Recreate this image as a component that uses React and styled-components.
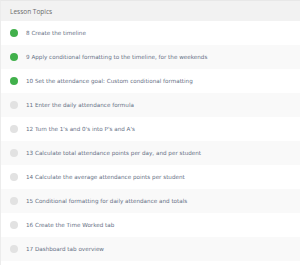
import React from "react";
import styled, { createGlobalStyle } from "styled-components";

const Global = createGlobalStyle`
  html, body { margin: 0; padding: 0; background: #fff; }
  body { font-family: "DejaVu Sans", "Open Sans", sans-serif; }
`;

const Panel = styled.div`
  width: 300px;
  height: 265px;
  box-sizing: border-box;
  border-top: 1px solid #e8e8e8;
  border-left: 1px solid #ececec;
  display: flex;
  flex-direction: column;
  overflow: hidden;
`;

const Header = styled.div`
  height: 20px;
  flex: none;
  display: flex;
  align-items: center;
  padding-left: 9px;
  background: #f2f2f2;
  color: #6b6b6b;
  font-family: "Open Sans", sans-serif;
  font-size: 6.5px;
`;

const Row = styled.div`
  height: 24px;
  flex: none;
  display: flex;
  align-items: center;
  gap: 8px;
  padding-left: 9px;
  background: ${(p) => (p.$alt ? "#f9f9f9" : "#ffffff")};
  color: #667085;
  font-size: 5.65px;
  white-space: nowrap;
`;

const Dot = styled.span`
  width: 8px;
  height: 8px;
  border-radius: 50%;
  flex: none;
  background: ${(p) => (p.$done ? "#41b04b" : "#e2e2e2")};
`;

const topics = [
  ["8 Create the timeline", true],
  ["9 Apply conditional formatting to the timeline, for the weekends", true],
  ["10 Set the attendance goal: Custom conditional formatting", true],
  ["11 Enter the daily attendance formula", false],
  ["12 Turn the 1's and 0's into P's and A's", false],
  ["13 Calculate total attendance points per day, and per student", false],
  ["14 Calculate the average attendance points per student", false],
  ["15 Conditional formatting for daily attendance and totals", false],
  ["16 Create the Time Worked tab", false],
  ["17 Dashboard tab overview", false],
];

export default function App() {
  return (
    <>
      <Global />
      <Panel>
        <Header>Lesson Topics</Header>
        {topics.map(([t, done], i) => (
          <Row key={t} $alt={i % 2 === 1}>
            <Dot $done={done} />
            {t}
          </Row>
        ))}
      </Panel>
    </>
  );
}
